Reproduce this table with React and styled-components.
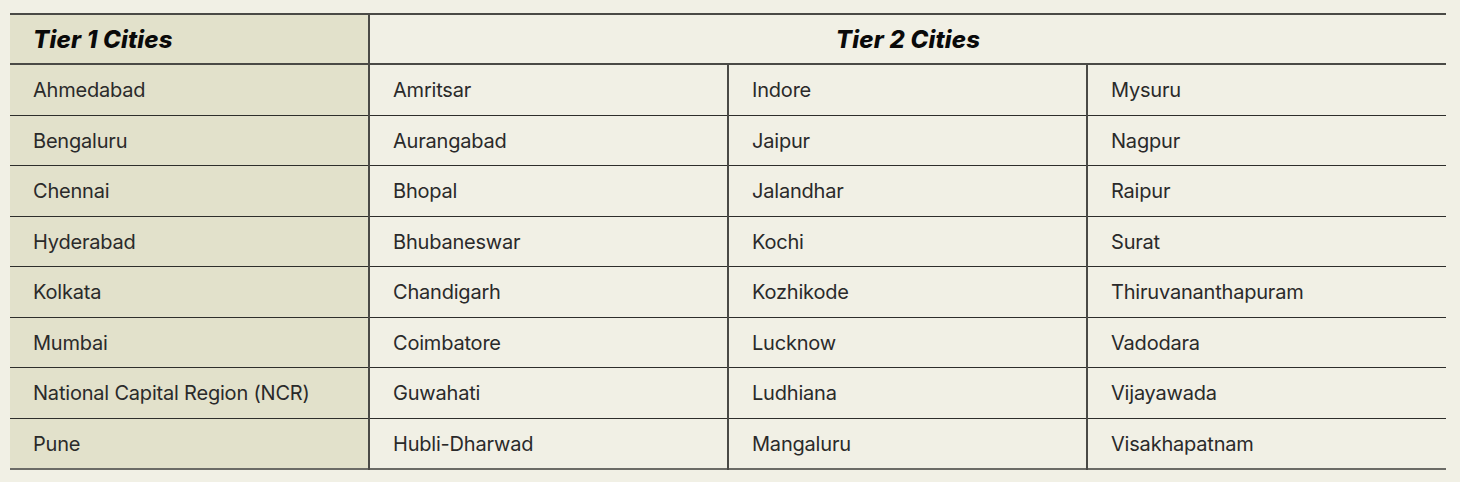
import React from "react";
import styled, { createGlobalStyle } from "styled-components";

const GlobalStyle = createGlobalStyle`
  html, body {
    margin: 0;
    padding: 0;
    background: #f1f0e5;
  }
  body {
    font-family: Inter, "Liberation Sans", sans-serif;
    color: #1a1a1a;
  }
`;

const Page = styled.div`
  padding: 13px 14px 0 10px;
  width: 1460px;
  height: 482px;
  box-sizing: border-box;
`;

const Table = styled.table`
  width: 1436px;
  border-collapse: collapse;
  table-layout: fixed;
  border-top: 2px solid #4a4a46;
  border-bottom: 2px solid #6b6b66;
`;

const Col = styled.col`
  width: 359px;
`;

const HeadCell = styled.th`
  height: 47px;
  padding: 1px 23px 0;
  font-size: 24px;
  font-weight: 800;
  font-style: italic;
  letter-spacing: 0.2px;
  color: #0a0a0a;
  text-align: ${({ $center }) => ($center ? "center" : "left")};
  background: ${({ $tier1 }) => ($tier1 ? "#e2e1cb" : "#f1f0e5")};
  border-bottom: 2px solid #4a4a46;
  border-left: ${({ $tier1 }) => ($tier1 ? "none" : "2px solid #4a4a46")};
`;

const Cell = styled.td`
  height: 48.5px;
  padding: 1px 23px 0;
  font-size: 20px;
  font-weight: 400;
  letter-spacing: -0.2px;
  color: #2a2a2a;
  background: ${({ $tier1 }) => ($tier1 ? "#e2e1cb" : "#f1f0e5")};
  border-bottom: 1.5px solid #2e2e2b;
  border-left: ${({ $tier1 }) => ($tier1 ? "none" : "2px solid #4a4a46")};
  white-space: nowrap;
`;

const Row = styled.tr`
  &:last-child td {
    border-bottom: none;
  }
`;

const rows = [
  ["Ahmedabad", "Amritsar", "Indore", "Mysuru"],
  ["Bengaluru", "Aurangabad", "Jaipur", "Nagpur"],
  ["Chennai", "Bhopal", "Jalandhar", "Raipur"],
  ["Hyderabad", "Bhubaneswar", "Kochi", "Surat"],
  ["Kolkata", "Chandigarh", "Kozhikode", "Thiruvananthapuram"],
  ["Mumbai", "Coimbatore", "Lucknow", "Vadodara"],
  ["National Capital Region (NCR)", "Guwahati", "Ludhiana", "Vijayawada"],
  ["Pune", "Hubli-Dharwad", "Mangaluru", "Visakhapatnam"],
];

export default function App() {
  return (
    <Page>
      <GlobalStyle />
      <Table>
        <colgroup>
          <Col />
          <Col />
          <Col />
          <Col />
        </colgroup>
        <thead>
          <tr>
            <HeadCell $tier1>Tier 1 Cities</HeadCell>
            <HeadCell colSpan={3} $center>
              Tier 2 Cities
            </HeadCell>
          </tr>
        </thead>
        <tbody>
          {rows.map((row, index) => (
            <Row key={index}>
              {row.map((city, col) => (
                <Cell key={col} $tier1={col === 0}>
                  {city}
                </Cell>
              ))}
            </Row>
          ))}
        </tbody>
      </Table>
    </Page>
  );
}
